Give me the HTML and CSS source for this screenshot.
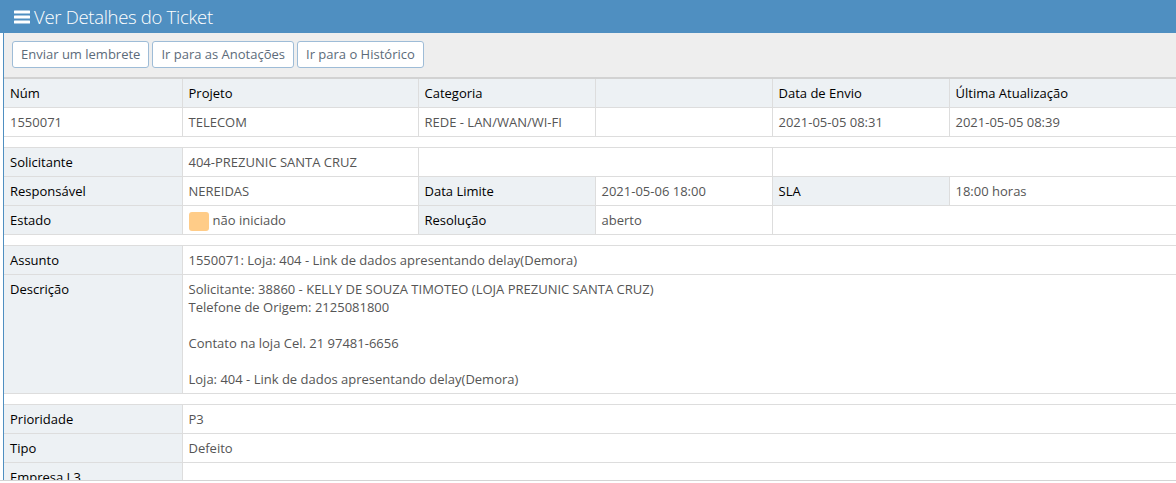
FILE: index.html
```html
<!DOCTYPE html>
<html lang="pt-BR">
<head>
<meta charset="utf-8">
<title>Ver Detalhes do Ticket</title>
<link rel="stylesheet" href="styles.css">
</head>
<body>
<div class="panel-head">
  <svg class="bars" width="16" height="14" viewBox="0 0 16 14"><rect x="0" y="0.5" width="16" height="3" rx="0.5"/><rect x="0" y="5.5" width="16" height="3" rx="0.5"/><rect x="0" y="10.5" width="16" height="3" rx="0.5"/></svg>
  <span class="title">Ver Detalhes do Ticket</span>
</div>
<div class="panel-body">
  <div class="toolbar">
    <button class="btn">Enviar um lembrete</button>
    <button class="btn">Ir para as Anotações</button>
    <button class="btn">Ir para o Histórico</button>
  </div>

  <table class="grid">
    <colgroup><col class="c1"><col class="c2"><col class="c3"><col class="c4"><col class="c5"><col></colgroup>
    <tr class="lbl-row"><td>Núm</td><td>Projeto</td><td>Categoria</td><td></td><td>Data de Envio</td><td>Última Atualização</td></tr>
    <tr><td>1550071</td><td>TELECOM</td><td>REDE - LAN/WAN/WI-FI</td><td></td><td>2021-05-05 08:31</td><td>2021-05-05 08:39</td></tr>
  </table>

  <table class="grid spaced">
    <colgroup><col class="c1"><col class="c2"><col class="c3"><col class="c4"><col class="c5"><col></colgroup>
    <tr><td class="lbl">Solicitante</td><td>404-PREZUNIC SANTA CRUZ</td><td colspan="2"></td><td colspan="2"></td></tr>
    <tr><td class="lbl">Responsável</td><td>NEREIDAS</td><td class="lbl">Data Limite</td><td>2021-05-06 18:00</td><td class="lbl">SLA</td><td>18:00 horas</td></tr>
    <tr><td class="lbl">Estado</td><td><span class="badge"></span>não iniciado</td><td class="lbl">Resolução</td><td>aberto</td><td colspan="2"></td></tr>
  </table>

  <table class="grid spaced">
    <colgroup><col class="c1"><col></colgroup>
    <tr><td class="lbl">Assunto</td><td>1550071: Loja: 404 - Link de dados apresentando delay(Demora)</td></tr>
    <tr><td class="lbl">Descrição</td><td>Solicitante: 38860 - KELLY DE SOUZA TIMOTEO (LOJA PREZUNIC SANTA CRUZ)<br>Telefone de Origem: 2125081800<br><br>Contato na loja Cel. 21 97481-6656<br><br>Loja: 404 - Link de dados apresentando delay(Demora)</td></tr>
  </table>

  <table class="grid spaced">
    <colgroup><col class="c1"><col></colgroup>
    <tr><td class="lbl">Prioridade</td><td>P3</td></tr>
    <tr><td class="lbl">Tipo</td><td>Defeito</td></tr>
    <tr><td class="lbl">Empresa L3</td><td></td></tr>
  </table>
</div>
<div class="frame-edge"></div>
</body>
</html>
```

FILE: styles.css
```css
html, body {
  margin: 0;
  padding: 0;
  background: #ffffff;
  font-family: "Open Sans", "Noto Sans", sans-serif;
  font-size: 13px;
  overflow: hidden;
}

.panel-head {
  height: 33px;
  background: #4f8fc1;
  color: #ffffff;
  display: flex;
  align-items: center;
  padding-left: 14px;
  box-sizing: border-box;
}

.bars {
  fill: #ffffff;
  margin-right: 4px;
  margin-top: 1px;
}

.title {
  font-size: 18.5px;
  font-weight: 300;
  line-height: 33px;
  letter-spacing: -0.3px;
}

.panel-body {
  margin-left: 3px;
  border-left: 1px solid #4f8fc1;
}

.toolbar {
  background: #eeeeee;
  padding: 8px 8px 9px;
  border-bottom: 2px solid #d2d2d2;
  display: flex;
  gap: 3px;
}

.btn {
  font-family: "Open Sans", "Noto Sans", sans-serif;
  font-size: 13px;
  color: #5c6b7a;
  background: #ffffff;
  border: 1px solid #9ebcd7;
  border-radius: 3px;
  height: 27px;
  padding: 0 8px;
  line-height: 25px;
}

.grid {
  width: 100%;
  border-collapse: collapse;
  table-layout: fixed;
}

.grid.spaced {
  margin-top: 10px;
  border-top: 1px solid #dddddd;
}

.c1 { width: 178px; }
.c2 { width: 236px; }
.c3 { width: 177px; }
.c4 { width: 177px; }
.c5 { width: 177px; }

.grid td {
  border: 1px solid #dddddd;
  padding: 5px 6px;
  line-height: 18px;
  height: 18px;
  color: #555555;
  vertical-align: top;
  white-space: nowrap;
  overflow: hidden;
}

.grid td:first-child { border-left: none; }
.grid td:last-child { border-right: none; }
.grid tr:first-child td { border-top: none; }

.lbl-row td, .grid td.lbl {
  background: #edf1f4;
  color: #000000;
}

.badge {
  display: inline-block;
  width: 20px;
  height: 19px;
  background: #ffcc88;
  border-radius: 3px;
  vertical-align: top;
  margin: 1px 4px -3px 0;
}

.frame-edge {
  position: fixed;
  left: 0;
  right: 0;
  bottom: 0;
  height: 2px;
  background: #ffffff;
  border-top: 1px solid #d4d4d4;
}
```
